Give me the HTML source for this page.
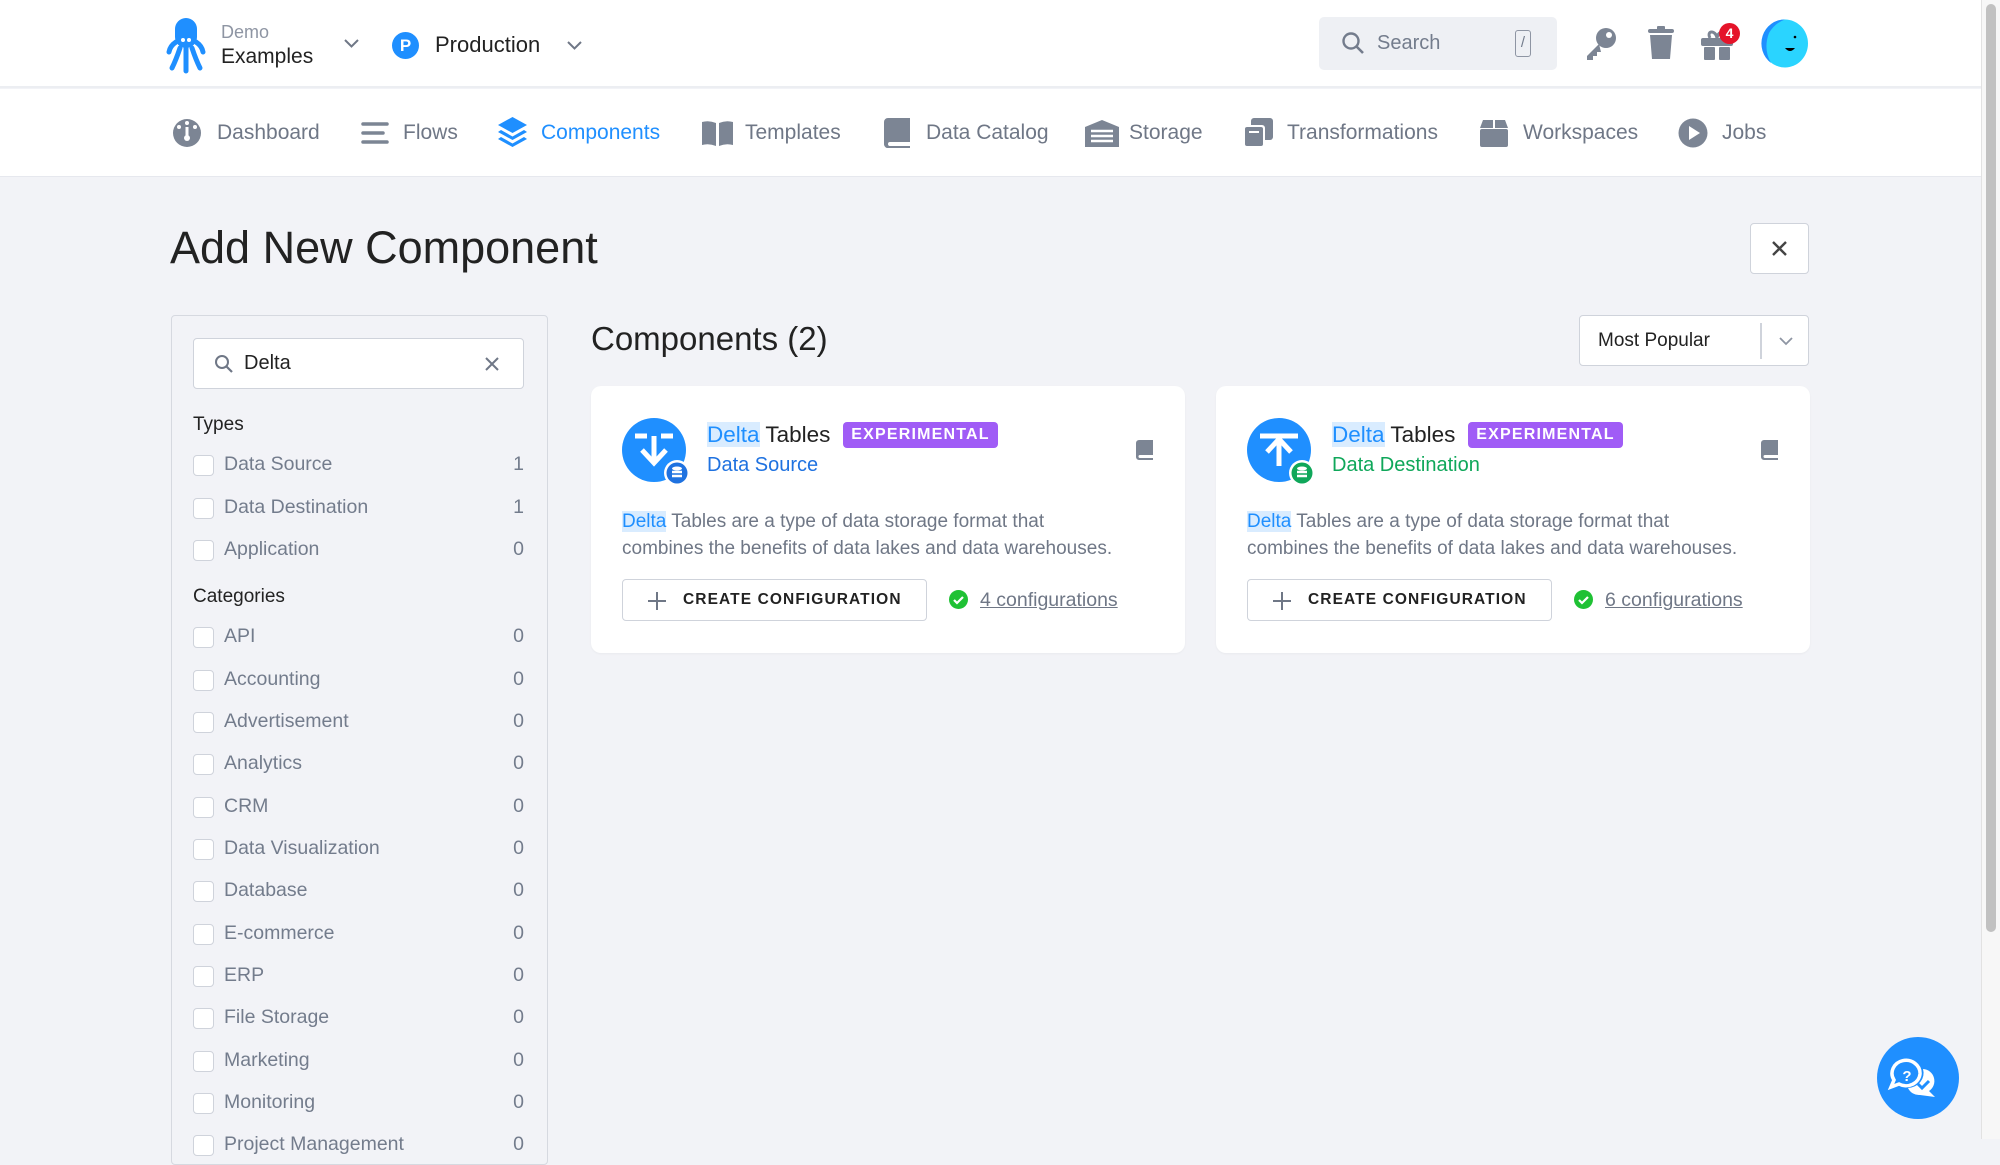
<!DOCTYPE html>
<html><head><meta charset="utf-8"><style>
*{box-sizing:border-box;margin:0;padding:0}
body{width:2000px;height:1139px;overflow:hidden;background:#f2f3f7;font-family:"Liberation Sans",sans-serif;position:relative;color:#222}
.a{position:absolute}
.hdr{left:0;top:0;width:1981px;height:88px;background:#fff;border-bottom:2px solid #eceef2}
.nav{left:0;top:89px;width:1981px;height:88px;background:#fff;border-bottom:1px solid #e6e8ee}
.ni{position:absolute;top:121px;font-size:21px;color:#6f7786;line-height:24px}
.ic{position:absolute;top:119px}
.scroll{left:1981px;top:0;width:19px;height:1139px;background:#f7f7f7;border-left:1px solid #e2e2e2}
.thumb{left:1986px;top:4px;width:10px;height:928px;background:#c1c1c1;border-radius:5px}
.side{left:171px;top:315px;width:377px;height:850px;border:1px solid #d6d9e0;border-radius:4px}
.row{position:absolute;left:193px;width:331px;height:24px;font-size:19.5px;color:#737c8c}
.row .cb{position:absolute;left:0;top:2px;width:21px;height:21px;border:1.5px solid #cfd3db;border-radius:4px;background:#fff}
.row .l{position:absolute;left:31px;top:0}
.row .n{position:absolute;right:0;top:0}
.lab{position:absolute;left:193px;font-size:19px;color:#222;font-weight:500}
.card{position:absolute;top:386px;width:594px;height:267px;background:#fff;border-radius:10px;box-shadow:0 1px 2px rgba(0,0,0,.04)}
.hl{background:#d9ecff;color:#1f8fff}
.badge{position:absolute;left:252px;top:36px;width:155px;height:26px;background:#a05cf6;color:#fff;border-radius:4px;font-size:16px;letter-spacing:1.2px;text-align:center;line-height:26px;font-weight:bold}
.btn{position:absolute;left:31px;top:193px;width:305px;height:42px;border:1.5px solid #cfd3db;border-radius:4px;font-size:15.5px;letter-spacing:1.1px;font-weight:bold;color:#222;line-height:40px;padding-left:60px;white-space:nowrap}
.desc{position:absolute;left:31px;top:122px;font-size:19px;line-height:27px;color:#6f7786;width:525px}
</style></head><body>
<div class="a hdr"></div>
<svg class="a" style="left:166px;top:16px" width="40" height="58" viewBox="0 0 40 58"><rect x="9" y="2" width="22" height="30" rx="11" fill="#1f8fff"/><path d="M10 26 Q4 30 3 36 M14 32 Q10 44 6 52 M20 32 L20 55 M26 32 Q30 44 34 52 M30 26 Q36 30 37 36" stroke="#1f8fff" stroke-width="5" fill="none" stroke-linecap="round"/><circle cx="17" cy="24" r="2" fill="#fff"/><circle cx="23" cy="24" r="2" fill="#fff"/></svg>
<div class="a" style="left:221px;top:22px;font-size:18px;color:#8e95a3">Demo</div>
<div class="a" style="left:221px;top:45px;font-size:21px;color:#222">Examples</div>
<svg class="a" style="left:343px;top:38px" width="17" height="11"><path d="M2 2l6.5 6.5L15 2" stroke="#6f7786" stroke-width="2" fill="none"/></svg>
<div class="a" style="left:392px;top:32px;width:27px;height:27px;border-radius:50%;background:#1f8fff;color:#fff;font-weight:bold;font-size:17px;text-align:center;line-height:27px">P</div>
<div class="a" style="left:435px;top:32px;font-size:22px;color:#222">Production</div>
<svg class="a" style="left:566px;top:40px" width="17" height="11"><path d="M2 2l6.5 6.5L15 2" stroke="#6f7786" stroke-width="2" fill="none"/></svg>
<div class="a" style="left:1319px;top:17px;width:238px;height:53px;background:#eef0f4;border-radius:5px"></div>
<svg class="a" style="left:1341px;top:31px" width="24" height="24"><circle cx="10" cy="10" r="7.5" stroke="#737c8c" stroke-width="2.4" fill="none"/><path d="M15.5 15.5L22 22" stroke="#737c8c" stroke-width="2.6"/></svg>
<div class="a" style="left:1377px;top:32px;font-size:20px;color:#737c8c">Search</div>
<div class="a" style="left:1515px;top:30px;width:16px;height:27px;border:1.5px solid #8e95a3;border-radius:3px;font-size:15px;color:#737c8c;text-align:center;line-height:24px">/</div>
<svg class="a" style="left:1584px;top:26px" width="34" height="36" viewBox="0 0 34 36"><circle cx="22" cy="12" r="10" fill="#7c8594"/><circle cx="25" cy="9" r="3" fill="#fff"/><path d="M15 18L3 30v4h6v-4h4v-4h4" fill="#7c8594"/></svg>
<svg class="a" style="left:1648px;top:26px" width="26" height="34"><rect x="0" y="3" width="26" height="4" rx="2" fill="#7c8594"/><rect x="9" y="0" width="8" height="4" rx="1" fill="#7c8594"/><path d="M2 9h22l-2 24H4z" fill="#7c8594"/></svg>
<svg class="a" style="left:1701px;top:27px" width="32" height="34"><rect x="0" y="11" width="32" height="8" rx="2" fill="#7c8594"/><rect x="3" y="20" width="11" height="13" rx="1" fill="#7c8594"/><rect x="18" y="20" width="11" height="13" rx="1" fill="#7c8594"/><path d="M9 11c-4-8 6-8 7 0c1-8 11-8 7 0" stroke="#7c8594" stroke-width="3" fill="none"/></svg>
<div class="a" style="left:1719px;top:23px;width:21px;height:21px;border-radius:50%;background:#e5142a;color:#fff;font-size:14px;font-weight:bold;text-align:center;line-height:21px">4</div>
<svg class="a" style="left:1761px;top:19px" width="48" height="49"><ellipse cx="24" cy="24.5" rx="23" ry="24" fill="#2ad4ff"/><path d="M24 .5A23 24 0 0 0 10 44Q2 30 8 14Q14 4 24 .5z" fill="#1f8fff"/><circle cx="34" cy="18" r="1.3" fill="#000"/><path d="M24 29q5 6 10 0z" fill="#000"/></svg>

<div class="a nav"></div>
<svg class="ic" style="left:172px;top:118px" width="30" height="30"><circle cx="15" cy="15" r="14" fill="#7c8594"/><circle cx="15" cy="5" r="2" fill="#fff"/><circle cx="7" cy="9" r="2" fill="#fff"/><circle cx="23" cy="9" r="2" fill="#fff"/><path d="M15 9v11" stroke="#fff" stroke-width="3"/><circle cx="15" cy="20" r="3" fill="#fff"/></svg>
<div class="ni" style="left:217px">Dashboard</div>
<svg class="ic" style="left:361px;top:121px" width="28" height="24"><path d="M2 3h24M2 12h20M2 21h24" stroke="#7c8594" stroke-width="3.5" stroke-linecap="round"/></svg>
<div class="ni" style="left:403px">Flows</div>
<svg class="ic" style="left:497px;top:116px" width="31" height="32"><path d="M15.5 1L30 9l-14.5 8L1 9z" fill="#1f8fff"/><path d="M4 14l11.5 6.5L27 14l3 2-14.5 8L1 16z" fill="#1f8fff"/><path d="M4 21l11.5 6.5L27 21l3 2-14.5 8L1 23z" fill="#1f8fff"/></svg>
<div class="ni" style="left:541px;color:#1f8fff">Components</div>
<svg class="ic" style="left:701px;top:120px" width="33" height="26"><path d="M1 2q7-2 14 1v23q-7-3-14-1z M18 3q7-3 14-1v23q-7-2-14 1z" fill="#7c8594"/></svg>
<div class="ni" style="left:745px">Templates</div>
<svg class="ic" style="left:884px;top:118px" width="26" height="30"><path d="M4 0h22v24H6a2 2 0 0 0 0 4h20v2H5a4 4 0 0 1-5-4V4a4 4 0 0 1 4-4z" fill="#7c8594"/></svg>
<div class="ni" style="left:926px">Data Catalog</div>
<svg class="ic" style="left:1085px;top:120px" width="34" height="27"><path d="M17 0L34 7v20H0V7z" fill="#7c8594"/><path d="M6 11h22M6 16h22M6 21h22" stroke="#fff" stroke-width="2.5"/></svg>
<div class="ni" style="left:1129px">Storage</div>
<svg class="ic" style="left:1243px;top:118px" width="30" height="30"><rect x="8" y="0" width="22" height="22" rx="3" fill="#7c8594"/><rect x="0" y="7" width="22" height="23" rx="3" fill="#fff"/><rect x="2" y="9" width="18" height="19" rx="2" fill="#7c8594"/><path d="M6 14h10" stroke="#fff" stroke-width="2"/></svg>
<div class="ni" style="left:1287px">Transformations</div>
<svg class="ic" style="left:1480px;top:120px" width="28" height="27"><path d="M3 0h22l3 8H0z" fill="#7c8594"/><rect x="0" y="9" width="28" height="18" rx="2" fill="#7c8594"/><path d="M14 0v8" stroke="#fff" stroke-width="2"/></svg>
<div class="ni" style="left:1523px">Workspaces</div>
<svg class="ic" style="left:1678px;top:118px" width="30" height="30"><circle cx="15" cy="15" r="14.5" fill="#7c8594"/><path d="M11 8l11 7-11 7z" fill="#fff"/></svg>
<div class="ni" style="left:1722px">Jobs</div>

<div class="a" style="left:170px;top:222px;font-size:45px;color:#222">Add New Component</div>
<div class="a" style="left:1750px;top:223px;width:59px;height:51px;border:1.5px solid #cfd3db;border-radius:4px;background:#fff"></div>
<svg class="a" style="left:1771px;top:240px" width="17" height="17"><path d="M2 2l13 13M15 2L2 15" stroke="#444" stroke-width="2.4"/></svg>

<div class="a side"></div>
<div class="a" style="left:193px;top:338px;width:331px;height:51px;background:#fff;border:1.5px solid #cfd3db;border-radius:4px"></div>
<svg class="a" style="left:214px;top:354px" width="20" height="20"><circle cx="8" cy="8" r="6" stroke="#6f7786" stroke-width="2" fill="none"/><path d="M12.5 12.5L18 18" stroke="#6f7786" stroke-width="2.2"/></svg>
<div class="a" style="left:244px;top:352px;font-size:20px;color:#222">Delta</div>
<svg class="a" style="left:485px;top:357px" width="14" height="14"><path d="M1 1l12 12M13 1L1 13" stroke="#6f7786" stroke-width="2"/></svg>
<div class="lab" style="top:414px">Types</div>
<div class="row" style="top:453px"><div class="cb"></div><div class="l">Data Source</div><div class="n">1</div></div>
<div class="row" style="top:496px"><div class="cb"></div><div class="l">Data Destination</div><div class="n">1</div></div>
<div class="row" style="top:538px"><div class="cb"></div><div class="l">Application</div><div class="n">0</div></div>
<div class="lab" style="top:586px">Categories</div>
<div class="row" style="top:625px"><div class="cb"></div><div class="l">API</div><div class="n">0</div></div>
<div class="row" style="top:668px"><div class="cb"></div><div class="l">Accounting</div><div class="n">0</div></div>
<div class="row" style="top:710px"><div class="cb"></div><div class="l">Advertisement</div><div class="n">0</div></div>
<div class="row" style="top:752px"><div class="cb"></div><div class="l">Analytics</div><div class="n">0</div></div>
<div class="row" style="top:795px"><div class="cb"></div><div class="l">CRM</div><div class="n">0</div></div>
<div class="row" style="top:837px"><div class="cb"></div><div class="l">Data Visualization</div><div class="n">0</div></div>
<div class="row" style="top:879px"><div class="cb"></div><div class="l">Database</div><div class="n">0</div></div>
<div class="row" style="top:922px"><div class="cb"></div><div class="l">E-commerce</div><div class="n">0</div></div>
<div class="row" style="top:964px"><div class="cb"></div><div class="l">ERP</div><div class="n">0</div></div>
<div class="row" style="top:1006px"><div class="cb"></div><div class="l">File Storage</div><div class="n">0</div></div>
<div class="row" style="top:1049px"><div class="cb"></div><div class="l">Marketing</div><div class="n">0</div></div>
<div class="row" style="top:1091px"><div class="cb"></div><div class="l">Monitoring</div><div class="n">0</div></div>
<div class="row" style="top:1133px"><div class="cb"></div><div class="l">Project Management</div><div class="n">0</div></div>

<div class="a" style="left:591px;top:320px;font-size:33px;color:#222">Components (2)</div>
<div class="a" style="left:1579px;top:315px;width:230px;height:51px;background:#fff;border:1.5px solid #cfd3db;border-radius:4px"></div>
<div class="a" style="left:1598px;top:330px;font-size:19px;color:#222">Most Popular</div>
<div class="a" style="left:1760px;top:323px;width:1.5px;height:36px;background:#cfd3db"></div>
<svg class="a" style="left:1778px;top:336px" width="16" height="10"><path d="M2 2l6 6 6-6" stroke="#8e95a3" stroke-width="1.8" fill="none"/></svg>

<div class="card" style="left:591px">
<svg class="a" style="left:31px;top:32px" width="68" height="68"><circle cx="32" cy="32" r="32" fill="#1f8fff"/><path d="M13 18h12M39 18h12M32 18v26M20 32l12 13 12-13" stroke="#fff" stroke-width="5" fill="none"/><circle cx="55" cy="55" r="13" fill="#fff"/><circle cx="55" cy="55" r="10.5" fill="#1f72e0"/><ellipse cx="55" cy="50.5" rx="5" ry="2" fill="#fff"/><path d="M50 54h10M50 58h10" stroke="#fff" stroke-width="2.5"/></svg>
<div class="a" style="left:116px;top:36px;font-size:22.5px;color:#222"><span class="hl">Delta</span> Tables</div>
<div class="badge">EXPERIMENTAL</div>
<div class="a" style="left:116px;top:68px;font-size:20px;color:#1f72e0">Data Source</div>
<svg class="a" style="left:545px;top:54px" width="17" height="20"><path d="M3 0h14v15H4a1.5 1.5 0 0 0 0 3h13v2H3a3 3 0 0 1-3-3V3a3 3 0 0 1 3-3z" fill="#7c8594"/></svg>
<div class="desc"><span class="hl">Delta</span> Tables are a type of data storage format that<br>combines the benefits of data lakes and data warehouses.</div>
<div class="btn"><svg class="a" style="left:25px;top:12px" width="18" height="18"><path d="M9 0v18M0 9h18" stroke="#6f7786" stroke-width="2"/></svg>CREATE CONFIGURATION</div>
<svg class="a" style="left:358px;top:204px" width="19" height="19"><circle cx="9.5" cy="9.5" r="9.5" fill="#1fc134"/><path d="M5 10l3 3 6-6" stroke="#fff" stroke-width="2.2" fill="none"/></svg>
<div class="a" style="left:389px;top:203px;font-size:19.5px;color:#6f7786;text-decoration:underline">4 configurations</div>
</div>

<div class="card" style="left:1216px">
<svg class="a" style="left:31px;top:32px" width="68" height="68"><circle cx="32" cy="32" r="32" fill="#1f8fff"/><path d="M13 18h38M32 22v26M20 34l12-13 12 13" stroke="#fff" stroke-width="5" fill="none"/><circle cx="55" cy="55" r="13" fill="#fff"/><circle cx="55" cy="55" r="10.5" fill="#0fa75a"/><ellipse cx="55" cy="50.5" rx="5" ry="2" fill="#fff"/><path d="M50 54h10M50 58h10" stroke="#fff" stroke-width="2.5"/></svg>
<div class="a" style="left:116px;top:36px;font-size:22.5px;color:#222"><span class="hl">Delta</span> Tables</div>
<div class="badge">EXPERIMENTAL</div>
<div class="a" style="left:116px;top:68px;font-size:20px;color:#0fa75a">Data Destination</div>
<svg class="a" style="left:545px;top:54px" width="17" height="20"><path d="M3 0h14v15H4a1.5 1.5 0 0 0 0 3h13v2H3a3 3 0 0 1-3-3V3a3 3 0 0 1 3-3z" fill="#7c8594"/></svg>
<div class="desc"><span class="hl">Delta</span> Tables are a type of data storage format that<br>combines the benefits of data lakes and data warehouses.</div>
<div class="btn"><svg class="a" style="left:25px;top:12px" width="18" height="18"><path d="M9 0v18M0 9h18" stroke="#6f7786" stroke-width="2"/></svg>CREATE CONFIGURATION</div>
<svg class="a" style="left:358px;top:204px" width="19" height="19"><circle cx="9.5" cy="9.5" r="9.5" fill="#1fc134"/><path d="M5 10l3 3 6-6" stroke="#fff" stroke-width="2.2" fill="none"/></svg>
<div class="a" style="left:389px;top:203px;font-size:19.5px;color:#6f7786;text-decoration:underline">6 configurations</div>
</div>

<svg class="a" style="left:1876px;top:1036px" width="84" height="84"><circle cx="42" cy="42" r="41" fill="#1f8fff"/><path d="M44 38a14 13 0 1 0-26 6l-3 7 8-3a14 13 0 0 0 21-10z" stroke="#fff" stroke-width="3.5" fill="none"/><text x="31" y="45" font-family="Liberation Sans" font-weight="bold" font-size="15" fill="#fff" text-anchor="middle">?</text><path d="M47 33a12 12 0 0 1 6 22l6 6-15-2a12 12 0 0 1-12-7a16 15 0 0 0 15-19z" fill="#fff"/><path d="M42 48l4 4 7-7" stroke="#1f8fff" stroke-width="3" fill="none"/></svg>

<div class="a scroll"></div>
<div class="a thumb"></div>
</body></html>
